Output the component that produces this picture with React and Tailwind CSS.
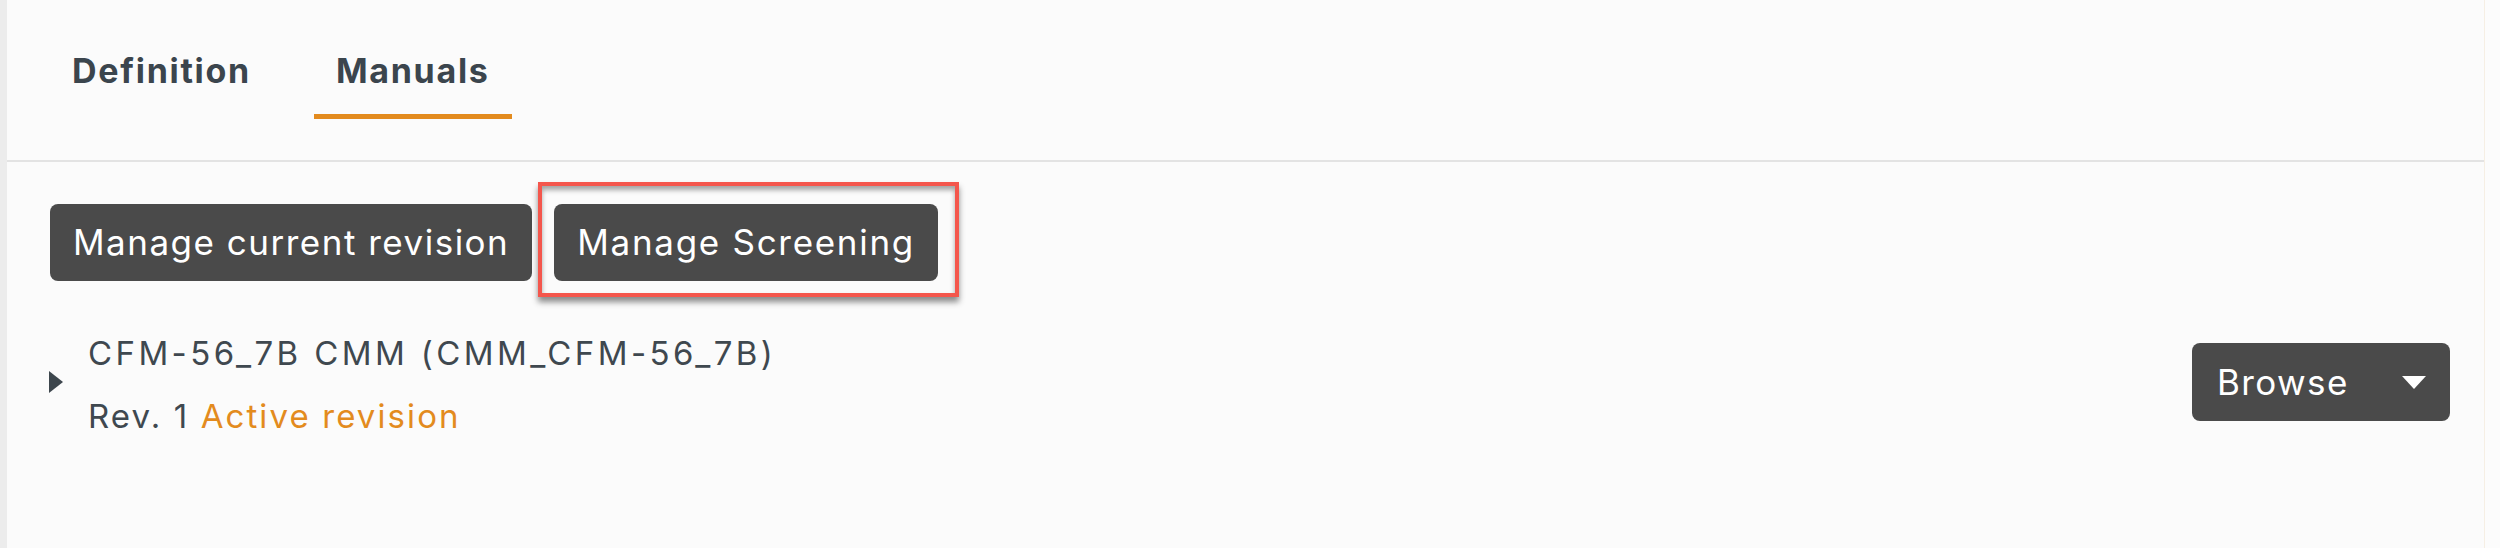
import { useState } from "react";

const tabs = ["Definition", "Manuals"];

function Tab({ label, active }) {
  return (
    <div className="flex flex-col items-center px-[22px]">
      <span className="mt-[46px] text-[34px] leading-[50px] font-bold tracking-[1.7px] text-[#3b454d]">{label}</span>
      <span className={`mt-[18px] h-[5px] self-stretch -mx-[22px] ${active ? "bg-[#e38b1e]" : "bg-transparent"}`} />
    </div>
  );
}

function DarkButton({ children, className = "" }) {
  return (
    <button
      className={`h-[77px] rounded-[8px] bg-[#4a4a4a] px-[23px] text-[35px] tracking-[1.5px] text-white ${className}`}
    >
      {children}
    </button>
  );
}

export default function App() {
  const [active] = useState("Manuals");

  return (
    <div className="flex h-[548px] w-[2500px] font-['Inter','Liberation_Sans',sans-serif] bg-[#fbfbfb]">
      {/* left gutter */}
      <div className="w-[7px] bg-[#ececec]" />

      <div className="flex flex-1 flex-col">
        {/* tab bar */}
        <div className="flex h-[162px] gap-[41px] border-b-2 border-[#e3e3e3] pl-[43px]">
          {tabs.map((t) => (
            <Tab key={t} label={t} active={t === active} />
          ))}
        </div>

        {/* actions */}
        <div className="mt-[42px] flex gap-[22px] pl-[43px]">
          <DarkButton>Manage current revision</DarkButton>
          <div className="relative">
            <DarkButton className="tracking-[1.7px]">Manage Screening</DarkButton>
            {/* annotation box */}
            <div className="pointer-events-none absolute -top-[22px] -left-[16px] -right-[21px] -bottom-[16px] border-[4px] border-[#f4564c] shadow-[0_5px_6px_rgba(0,0,0,0.45),inset_0_4px_5px_rgba(0,0,0,0.35)]" />
          </div>
        </div>

        {/* manual row */}
        <div className="mt-[35px] flex items-center pl-[42px] pr-[34px]">
          <svg width="14" height="22" viewBox="0 0 14 22" className="mr-[25px]">
            <path d="M0 0 L14 11 L0 22 Z" fill="#3d464d" />
          </svg>
          <div className="mt-[6px] flex-1 text-[33px] leading-[63px] text-[#3f484f]">
            <div className="tracking-[3.4px]">CFM-56_7B CMM (CMM_CFM-56_7B)</div>
            <div className="tracking-[2.1px]">
              Rev. 1 <span className="text-[#e38b1e]">Active revision</span>
            </div>
          </div>
          <button className="flex h-[78px] w-[258px] items-center rounded-[8px] bg-[#4a4a4a] pl-[25px] pr-[24px] text-[35px] tracking-[1.4px] text-white">
            <span className="flex-1 text-left">Browse</span>
            <svg width="24" height="13" viewBox="0 0 24 13">
              <path d="M0 0 L24 0 L12 13 Z" fill="#ffffff" />
            </svg>
          </button>
        </div>
      </div>

      {/* right edge */}
      <div className="w-[16px] border-l border-[#f6efe4] bg-[#fcfcfc]" />
    </div>
  );
}
